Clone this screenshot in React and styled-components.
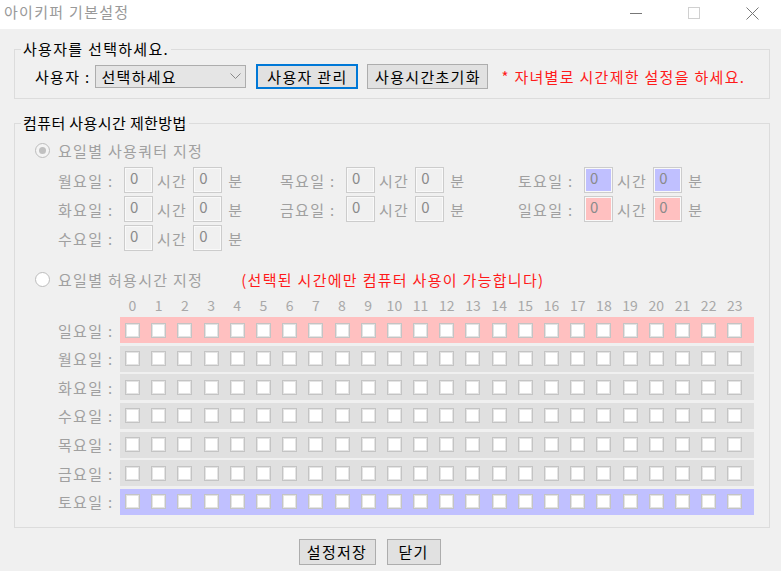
import React from "react"
import styled, { createGlobalStyle } from "styled-components"

const GlobalStyle = createGlobalStyle`
    html, body {
        margin: 0;
        padding: 0;
        background-color: #f0f0f0;
    }
    body {
        font-family: "Noto Sans CJK KR", "Noto Sans", sans-serif;
        font-size: 15px;
        letter-spacing: 1.3px;
        color: #000;
    }
`

const Window = styled.div`
    width: 781px;
    height: 571px;
    display: flex;
    flex-direction: column;
    background-color: #f0f0f0;
    overflow: hidden;
`

const TitleBar = styled.div`
    height: 29px;
    display: flex;
    justify-content: space-between;
    background-color: #fff;
`

const TitleText = styled.div`
    padding-left: 4px;
    line-height: 24px;
    color: #999;
`

const Controls = styled.div`
    display: flex;
`

const ControlBtn = styled.div`
    width: 58px;
    height: 26px;
    display: flex;
    align-items: center;
    justify-content: center;
`

const Body = styled.div`
    padding: 11px 11px 0 14px;
    display: flex;
    flex-direction: column;
`

const Group = styled.fieldset`
    margin: ${props => props.$gap || 0}px 0 0 0;
    padding: 0;
    border: 1px solid #dcdcdc;
    min-width: 0;
`

const Legend = styled.legend`
    margin-left: 6px;
    padding: 0 2px;
    line-height: 18px;
    letter-spacing: ${props => props.$ls ?? 1.3}px;
`

const UserRow = styled.div`
    display: flex;
    align-items: center;
    height: 25px;
    padding: 6px 0 9px 20px;
`

const Label = styled.span`
    white-space: nowrap;
    color: ${props => props.$dim ? "#a0a0a0" : "#000"};
`

const Combo = styled.div`
    margin-left: 5px;
    width: 140px;
    height: 21px;
    display: flex;
    align-items: center;
    justify-content: space-between;
    padding: 0 4px 0 5px;
    box-sizing: content-box;
    border: 1px solid #adadad;
    background-color: #e5e5e5;
`

const Button = styled.button`
    height: ${props => props.$h || 25}px;
    width: ${props => props.$w}px;
    margin-left: ${props => props.$ml || 0}px;
    padding: 0;
    font-family: inherit;
    font-size: 15px;
    letter-spacing: inherit;
    color: #000;
    background-color: #e1e1e1;
    border: ${props => props.$focus ? "2px solid #0078d7" : "1px solid #adadad"};
    box-sizing: border-box;
    cursor: pointer;
`

const Notice = styled.span`
    margin-left: ${props => props.$ml}px;
    white-space: nowrap;
    color: #ff1a1a;
`

const Section = styled.div`
    padding: 8px 0 12px 20px;
    display: flex;
    flex-direction: column;
`

const RadioRow = styled.div`
    height: 20px;
    display: flex;
    align-items: center;
    margin-top: ${props => props.$mt || 0}px;
`

const Radio = styled.span`
    width: 13px;
    height: 13px;
    border-radius: 50%;
    border: 1px solid #bcbcbc;
    background-color: ${props => props.$checked ? "#f4f4f4" : "#fff"};
    display: flex;
    align-items: center;
    justify-content: center;
    margin-right: 8px;

    &::after {
        content: "";
        display: ${props => props.$checked ? "block" : "none"};
        width: 7px;
        height: 7px;
        border-radius: 50%;
        background-color: #c0c0c0;
    }
`

const QuotaGrid = styled.div`
    margin: 7px 0 0 23px;
    display: grid;
    grid-template-columns: 222px 238px 1fr;
    row-gap: 3px;
`

const QuotaCell = styled.div`
    display: flex;
    align-items: center;
    height: 26px;
`

const QuotaLabel = styled(Label)`
    width: 66px;
`

const QuotaBox = styled.div`
    width: 29px;
    height: 26px;
    box-sizing: border-box;
    padding: 1px 0 0 5px;
    line-height: 18px;
    letter-spacing: 0;
    color: #8a8a8a;
    border: 1px solid #cccccc;
    box-shadow: inset 0 0 0 1px #f9f9f9;
    background-color: ${props =>
        props.$tone === "sat" ? "#c0c0ff" :
        props.$tone === "sun" ? "#ffc0c0" : "#f0f0f0"};
`

const Unit = styled(Label)`
    margin: 0 ${props => props.$mr || 0}px 0 ${props => props.$ml || 0}px;
`

const HourHeader = styled.div`
    margin: 8px 0 0 90px;
    display: grid;
    grid-template-columns: repeat(24, 26.2px);
    height: 16px;
`

const HourLabel = styled.span`
    width: 15px;
    display: flex;
    justify-content: center;
    font-size: 14px;
    line-height: 16px;
    letter-spacing: 0;
    color: #a8a8a8;
    white-space: nowrap;
`

const DayList = styled.div`
    margin: 4px 0 0 23px;
    display: flex;
    flex-direction: column;
    gap: 2.67px;
`

const DayRow = styled.div`
    display: flex;
    align-items: center;
    height: 26px;
`

const DayLabel = styled(Label)`
    width: 62px;
`

const HourStrip = styled.div`
    width: 634px;
    height: 26px;
    box-sizing: border-box;
    padding-left: 5px;
    display: grid;
    grid-template-columns: repeat(24, 26.2px);
    align-items: center;
    background-color: ${props =>
        props.$tone === "sat" ? "#c0c0ff" :
        props.$tone === "sun" ? "#ffc0c0" : "#e0e0e0"};
`

const HourBox = styled.span`
    width: 15px;
    height: 15px;
    box-sizing: border-box;
    background-color: #fff;
    border: 1px solid #c4c4c4;
    box-shadow: inset 0 0 0 1px #e4e4e4;
`

const Footer = styled.div`
    margin-top: 11px;
    padding-right: 45px;
    display: flex;
    justify-content: center;
    gap: 11px;
`

// ===== data =====
const quotaRows = [
    [{ day: "월요일" }, { day: "목요일" }, { day: "토요일", tone: "sat" }],
    [{ day: "화요일" }, { day: "금요일" }, { day: "일요일", tone: "sun" }],
    [{ day: "수요일" }],
]

const weekDays = [
    { day: "일요일", tone: "sun" },
    { day: "월요일" },
    { day: "화요일" },
    { day: "수요일" },
    { day: "목요일" },
    { day: "금요일" },
    { day: "토요일", tone: "sat" },
]

const hours = Array.from({ length: 24 }, (_, i) => i)

const Quota = ({ day, tone }) => (
    <QuotaCell>
        <QuotaLabel $dim>{day} :</QuotaLabel>
        <QuotaBox $tone={tone}>0</QuotaBox>
        <Unit $dim $ml={4} $mr={6}>시간</Unit>
        <QuotaBox $tone={tone}>0</QuotaBox>
        <Unit $dim $ml={6}>분</Unit>
    </QuotaCell>
)

const App = () => {
    return (
        <Window>
            <GlobalStyle />
            <TitleBar>
                <TitleText>아이키퍼 기본설정</TitleText>
                <Controls>
                    <ControlBtn>
                        <svg width="12" height="12" viewBox="0 0 12 12">
                            <line x1="0" y1="6.5" x2="12" y2="6.5" stroke="#777" strokeWidth="1" />
                        </svg>
                    </ControlBtn>
                    <ControlBtn>
                        <svg width="12" height="12" viewBox="0 0 12 12">
                            <rect x="0.5" y="0.5" width="11" height="11" fill="none" stroke="#d0d0d0" strokeWidth="1" />
                        </svg>
                    </ControlBtn>
                    <ControlBtn>
                        <svg width="13" height="13" viewBox="0 0 13 13">
                            <path d="M0.5 0.5 L12.5 12.5 M12.5 0.5 L0.5 12.5" stroke="#777" strokeWidth="1" />
                        </svg>
                    </ControlBtn>
                </Controls>
            </TitleBar>

            <Body>
                <Group>
                    <Legend>사용자를 선택하세요.</Legend>
                    <UserRow>
                        <Label>사용자 :</Label>
                        <Combo>
                            <span>선택하세요</span>
                            <svg width="11" height="7" viewBox="0 0 11 7">
                                <polyline points="0.5,0.5 5.5,5.5 10.5,0.5" fill="none" stroke="#888" strokeWidth="1" />
                            </svg>
                        </Combo>
                        <Button $focus $w={102} $ml={10}>사용자 관리</Button>
                        <Button $w={121} $ml={9}>사용시간초기화</Button>
                        <Notice $ml={13}>* 자녀별로 시간제한 설정을 하세요.</Notice>
                    </UserRow>
                </Group>

                <Group $gap={15}>
                    <Legend $ls={0.4}>컴퓨터 사용시간 제한방법</Legend>
                    <Section>
                        <RadioRow>
                            <Radio $checked />
                            <Label $dim>요일별 사용쿼터 지정</Label>
                        </RadioRow>
                        <QuotaGrid>
                            {quotaRows.map((row, r) =>
                                row.map(q => <Quota key={r + q.day} day={q.day} tone={q.tone} />)
                            )}
                        </QuotaGrid>

                        <RadioRow $mt={18}>
                            <Radio />
                            <Label $dim>요일별 허용시간 지정</Label>
                            <Notice $ml={38}>(선택된 시간에만 컴퓨터 사용이 가능합니다)</Notice>
                        </RadioRow>
                        <HourHeader>
                            {hours.map(h => <HourLabel key={h}>{h}</HourLabel>)}
                        </HourHeader>
                        <DayList>
                            {weekDays.map(d => (
                                <DayRow key={d.day}>
                                    <DayLabel $dim>{d.day} :</DayLabel>
                                    <HourStrip $tone={d.tone}>
                                        {hours.map(h => <HourBox key={h} />)}
                                    </HourStrip>
                                </DayRow>
                            ))}
                        </DayList>
                    </Section>
                </Group>

                <Footer>
                    <Button $w={77} $h={26}>설정저장</Button>
                    <Button $w={54} $h={26}>닫기</Button>
                </Footer>
            </Body>
        </Window>
    )
}

export default App
